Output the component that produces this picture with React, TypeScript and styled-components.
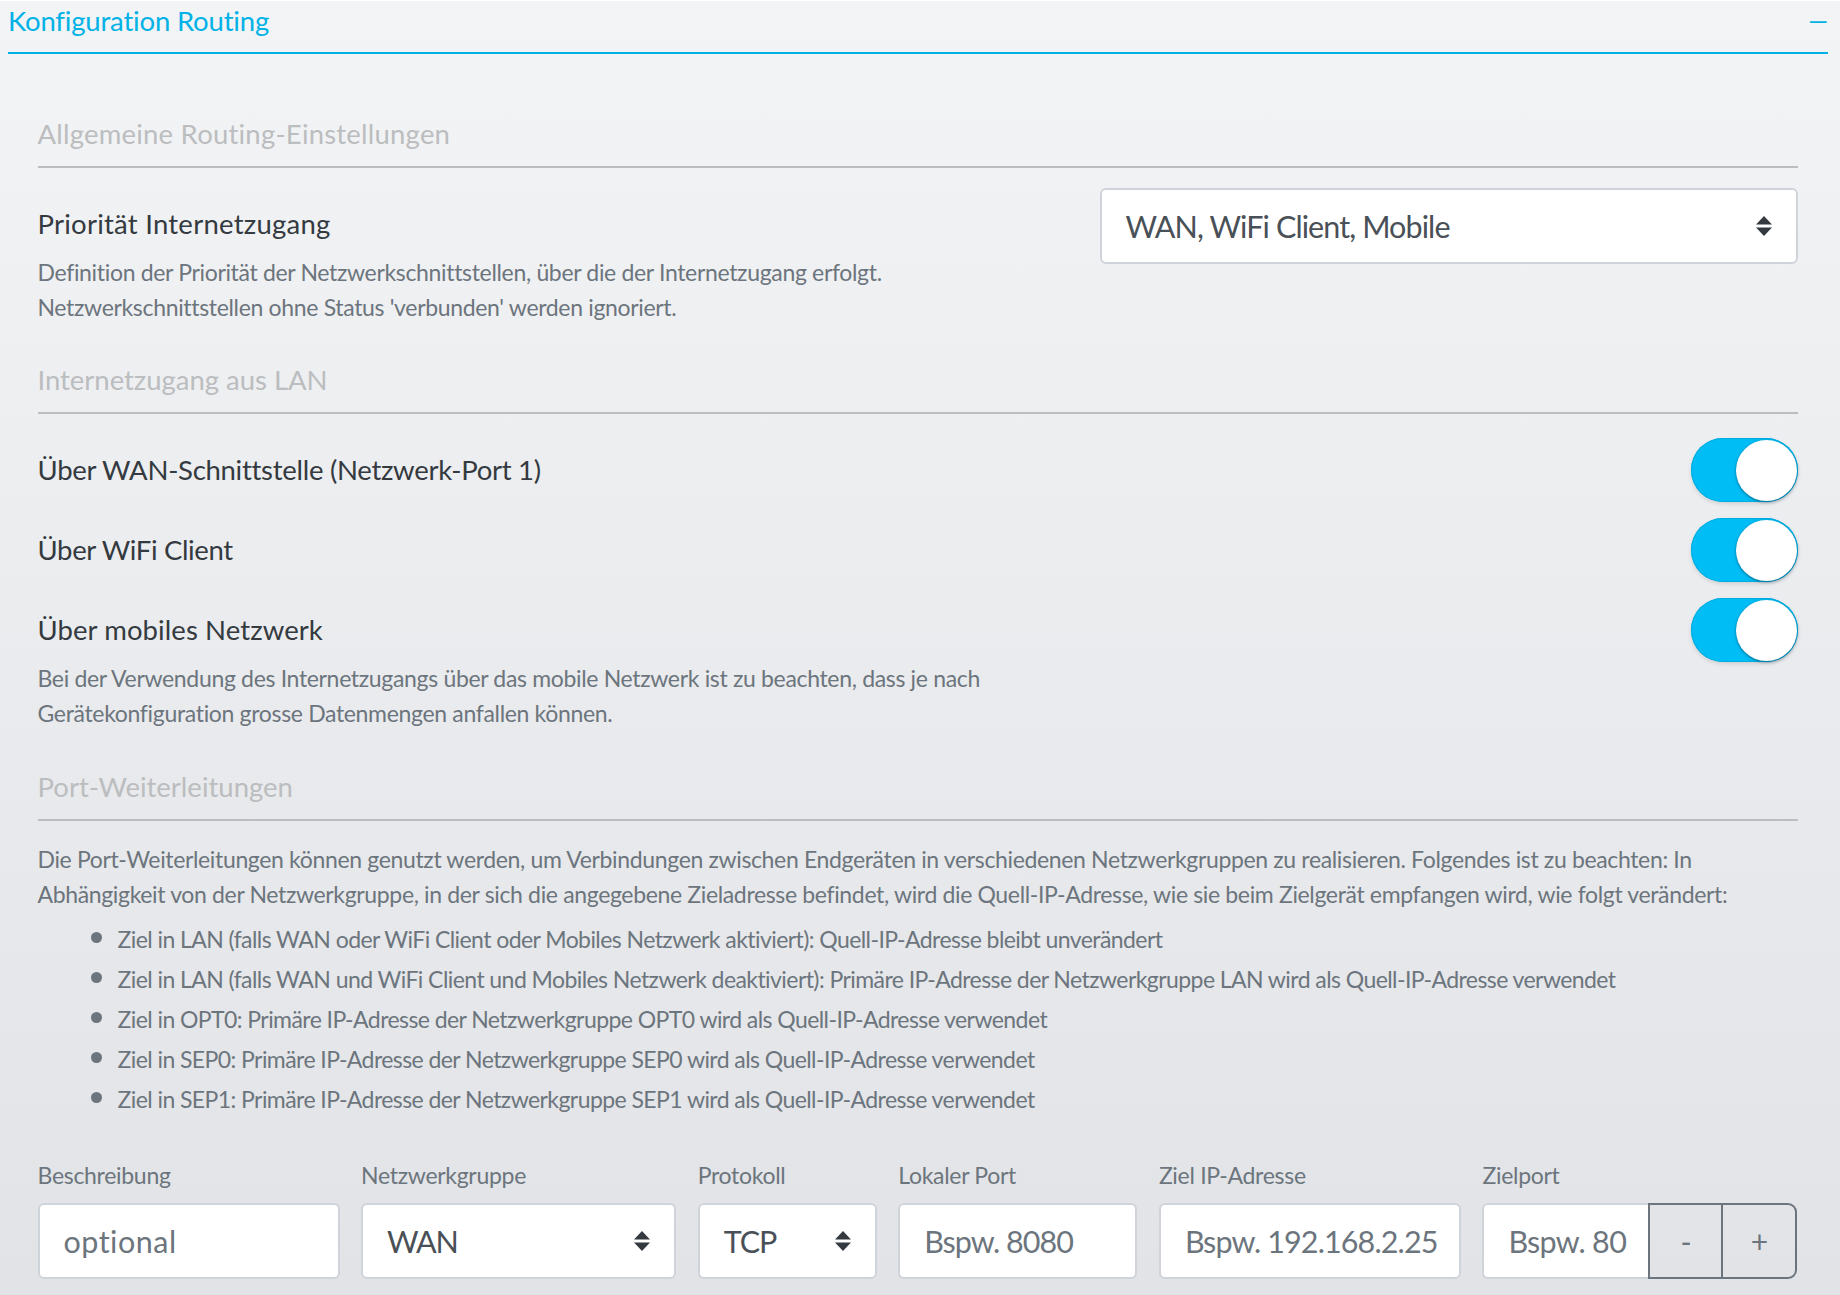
import React from "react";
import styled, { createGlobalStyle } from "styled-components";

const Global = createGlobalStyle`
  html, body { margin: 0; padding: 0; }
  body {
    width: 1840px; height: 1295px; overflow: hidden;
    font-family: "Lato", "Liberation Sans", sans-serif;
    background: #ffffff;
  }
`;

const Page = styled.main`
  box-sizing: border-box;
  width: 1840px;
  height: 1294px;
  margin-top: 1px;
  padding: 0 12px 0 8px;
  background: linear-gradient(180deg, #f3f4f6 0%, #e1e3e6 100%);
`;

const Header = styled.header`
  box-sizing: border-box;
  height: 53px;
  display: flex;
  justify-content: space-between;
  align-items: flex-start;
  border-bottom: 2px solid #00b2e6;
  color: #00b2e6;
`;

const HeaderTitle = styled.h1`
  margin: 0;
  font-size: 27.5px;
  line-height: 39px;
  font-weight: 400;
  letter-spacing: -0.18px;
`;

const Collapse = styled.span`
  font-size: 25px;
  line-height: 38px;
  font-weight: 400;
`;

const Body = styled.div`
  padding: 0 30.5px 0 29.5px;
`;

const SectionTitle = styled.h2<{ $top: number; $spacing: number }>`
  margin: ${(p) => p.$top}px 0 0;
  padding-bottom: 12px;
  border-bottom: 2px solid #bcbdbf;
  color: #bbbdbf;
  font-size: 27.5px;
  line-height: 40px;
  font-weight: 400;
  letter-spacing: ${(p) => p.$spacing}px;
`;

const PriorityRow = styled.div`
  display: flex;
  justify-content: space-between;
  align-items: flex-start;
  margin-top: 20px;
`;

const SwitchRow = styled.div<{ $top: number }>`
  display: flex;
  justify-content: space-between;
  align-items: flex-start;
  margin-top: ${(p) => p.$top}px;
`;

const TextColumn = styled.div<{ $top: number }>`
  padding-top: ${(p) => p.$top}px;
`;

const Label = styled.div<{ $spacing: number }>`
  color: #343a40;
  font-size: 27.5px;
  line-height: 40px;
  letter-spacing: ${(p) => p.$spacing}px;
`;

const Hint = styled.p`
  margin: 10.5px 0 0;
  color: #6c757d;
  font-size: 23px;
  line-height: 35.5px;
  letter-spacing: -0.33px;
`;

const Intro = styled.p`
  margin: 20.5px 0 0;
  color: #6c757d;
  font-size: 23px;
  line-height: 35.5px;
  letter-spacing: -0.35px;
`;

const Bullets = styled.ul`
  margin: 6px 0 0;
  padding: 0;
  list-style: none;
`;

const Bullet = styled.li`
  display: flex;
  align-items: center;
  gap: 16px;
  padding-left: 53px;
  height: 40px;
  color: #6c757d;
  font-size: 23px;
  letter-spacing: -0.57px;
  &::before {
    content: "";
    width: 11px;
    height: 11px;
    border-radius: 50%;
    background: #6c757d;
    flex: none;
    margin-top: -2px;
  }
`;

const FieldGrid = styled.div`
  display: grid;
  grid-template-columns: 302px 315px 179px 239px 302px 315px;
  column-gap: 21.6px;
  margin-top: 41px;
`;

const FieldLabel = styled.div`
  color: #6c757d;
  font-size: 23px;
  line-height: 30px;
  letter-spacing: -0.3px;
  margin-bottom: 13px;
`;

const Control = styled.div<{ $width?: number; $muted?: boolean; $spacing: number }>`
  box-sizing: border-box;
  width: ${(p) => (p.$width ? `${p.$width}px` : "100%")};
  height: 76px;
  display: flex;
  align-items: center;
  justify-content: space-between;
  padding: 0 24px;
  background: #fff;
  border: 2px solid #ced4da;
  border-radius: 6px;
  color: ${(p) => (p.$muted ? "#6c757d" : "#495057")};
  font-size: 30.5px;
  letter-spacing: ${(p) => p.$spacing}px;
  white-space: nowrap;
`;

const Group = styled.div`
  display: flex;
  height: 76px;
`;

const GroupControl = styled(Control)`
  flex: 1;
  min-width: 0;
  width: auto;
  border-right: 0;
  border-radius: 6px 0 0 6px;
`;

const StepButton = styled.button<{ $last?: boolean }>`
  box-sizing: border-box;
  flex: none;
  width: ${(p) => (p.$last ? 74 : 75)}px;
  height: 76px;
  padding: 0;
  background: transparent;
  border: 2px solid #6c757d;
  border-left-width: ${(p) => (p.$last ? 0 : 2)}px;
  border-radius: ${(p) => (p.$last ? "0 9px 9px 0" : "0")};
  color: #6c757d;
  font-family: inherit;
  font-size: 30px;
`;

const Track = styled.div`
  box-sizing: border-box;
  width: 107px;
  height: 64px;
  display: flex;
  justify-content: flex-end;
  align-items: center;
  padding: 0 1px;
  border-radius: 32px;
  background: #00bdf6;
  box-shadow: inset 0 0 0 1px #00addf, 0 2px 4px rgba(0, 0, 0, 0.12);
`;

const Thumb = styled.div`
  width: 61px;
  height: 61px;
  border-radius: 50%;
  background: #fff;
  box-shadow: 0 1px 3px rgba(0, 60, 90, 0.65);
`;

const Chevrons = () => (
  <svg width="16" height="20" viewBox="0 0 16 20" aria-hidden="true">
    <path d="M8 0 L16 8.6 H0 Z M0 11.4 H16 L8 20 Z" fill="#343a40" />
  </svg>
);

const Toggle = () => (
  <Track>
    <Thumb />
  </Track>
);

const bullets = [
  "Ziel in LAN (falls WAN oder WiFi Client oder Mobiles Netzwerk aktiviert): Quell-IP-Adresse bleibt unverändert",
  "Ziel in LAN (falls WAN und WiFi Client und Mobiles Netzwerk deaktiviert): Primäre IP-Adresse der Netzwerkgruppe LAN wird als Quell-IP-Adresse verwendet",
  "Ziel in OPT0: Primäre IP-Adresse der Netzwerkgruppe OPT0 wird als Quell-IP-Adresse verwendet",
  "Ziel in SEP0: Primäre IP-Adresse der Netzwerkgruppe SEP0 wird als Quell-IP-Adresse verwendet",
  "Ziel in SEP1: Primäre IP-Adresse der Netzwerkgruppe SEP1 wird als Quell-IP-Adresse verwendet",
];

export default function App() {
  return (
    <>
      <Global />
      <Page>
        <Header>
          <HeaderTitle>Konfiguration Routing</HeaderTitle>
          <Collapse>—</Collapse>
        </Header>
        <Body>
          <SectionTitle $top={60} $spacing={0.21}>Allgemeine Routing-Einstellungen</SectionTitle>
          <PriorityRow>
            <TextColumn $top={16}>
              <Label $spacing={0.24}>Priorität Internetzugang</Label>
              <Hint>
                Definition der Priorität der Netzwerkschnittstellen, über die der Internetzugang erfolgt.
                <br />
                Netzwerkschnittstellen ohne Status 'verbunden' werden ignoriert.
              </Hint>
            </TextColumn>
            <Control $width={698} $spacing={-0.9}>
              WAN, WiFi Client, Mobile
              <Chevrons />
            </Control>
          </PriorityRow>

          <SectionTitle $top={34.5} $spacing={-0.03}>Internetzugang aus LAN</SectionTitle>
          <SwitchRow $top={24}>
            <TextColumn $top={12}>
              <Label $spacing={-0.28}>Über WAN-Schnittstelle (Netzwerk-Port 1)</Label>
            </TextColumn>
            <Toggle />
          </SwitchRow>
          <SwitchRow $top={16}>
            <TextColumn $top={12}>
              <Label $spacing={-0.35}>Über WiFi Client</Label>
            </TextColumn>
            <Toggle />
          </SwitchRow>
          <SwitchRow $top={16}>
            <TextColumn $top={12}>
              <Label $spacing={0.08}>Über mobiles Netzwerk</Label>
              <Hint>
                Bei der Verwendung des Internetzugangs über das mobile Netzwerk ist zu beachten, dass je nach
                <br />
                Gerätekonfiguration grosse Datenmengen anfallen können.
              </Hint>
            </TextColumn>
            <Toggle />
          </SwitchRow>

          <SectionTitle $top={35.5} $spacing={0}>Port-Weiterleitungen</SectionTitle>
          <Intro>
            Die Port-Weiterleitungen können genutzt werden, um Verbindungen zwischen Endgeräten in verschiedenen Netzwerkgruppen zu realisieren. Folgendes ist zu beachten: In
            <br />
            Abhängigkeit von der Netzwerkgruppe, in der sich die angegebene Zieladresse befindet, wird die Quell-IP-Adresse, wie sie beim Zielgerät empfangen wird, wie folgt verändert:
          </Intro>
          <Bullets>
            {bullets.map((b) => (
              <Bullet key={b}>{b}</Bullet>
            ))}
          </Bullets>

          <FieldGrid>
            <div>
              <FieldLabel>Beschreibung</FieldLabel>
              <Control $muted $spacing={0.5}>optional</Control>
            </div>
            <div>
              <FieldLabel>Netzwerkgruppe</FieldLabel>
              <Control $spacing={-1.3}>
                WAN
                <Chevrons />
              </Control>
            </div>
            <div>
              <FieldLabel>Protokoll</FieldLabel>
              <Control $spacing={-1}>
                TCP
                <Chevrons />
              </Control>
            </div>
            <div>
              <FieldLabel>Lokaler Port</FieldLabel>
              <Control $muted $spacing={-0.95}>Bspw. 8080</Control>
            </div>
            <div>
              <FieldLabel>Ziel IP-Adresse</FieldLabel>
              <Control $muted $spacing={-0.87}>Bspw. 192.168.2.25</Control>
            </div>
            <div>
              <FieldLabel>Zielport</FieldLabel>
              <Group>
                <GroupControl $muted $spacing={-0.65}>Bspw. 80</GroupControl>
                <StepButton>-</StepButton>
                <StepButton $last>+</StepButton>
              </Group>
            </div>
          </FieldGrid>
        </Body>
      </Page>
    </>
  );
}
